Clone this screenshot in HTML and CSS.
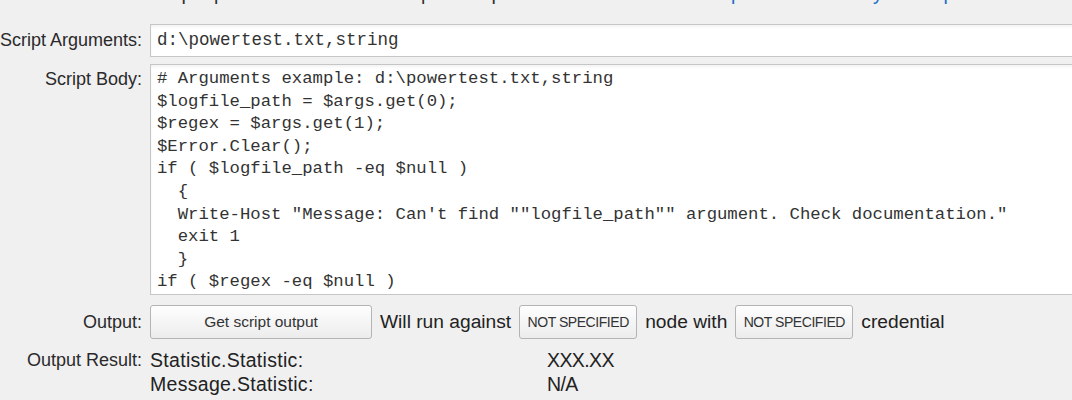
FILE: index.html
```html
<!DOCTYPE html>
<html lang="en">
<head>
    <meta charset="UTF-8">
    <title>PowerShell Script Monitor</title>
    <link rel="stylesheet" href="styles.css">
</head>
<body>
    <div class="hint">Output pairs must be written to print output lines. More <a href="#">Read about parameters and your output</a></div>
    <div class="row">
        <span class="label">Script Arguments:</span>
        <div class="field">d:\powertest.txt,string</div>
    </div>
    <div class="row row-top row-body">
        <span class="label label-body">Script Body:</span>
<pre class="code"># Arguments example: d:\powertest.txt,string
$logfile_path = $args.get(0);
$regex = $args.get(1);
$Error.Clear();
if ( $logfile_path -eq $null )
  {
  Write-Host "Message: Can't find ""logfile_path"" argument. Check documentation."
  exit 1
  }
if ( $regex -eq $null )</pre>
    </div>
    <div class="row row-output">
        <span class="label">Output:</span>
        <button class="btn btn-main">Get script output</button>
        <span class="inline-text">Will run against</span>
        <button class="btn btn-small">NOT SPECIFIED</button>
        <span class="inline-text">node with</span>
        <button class="btn btn-small">NOT SPECIFIED</button>
        <span class="inline-text">credential</span>
    </div>
    <div class="row row-top row-result">
        <span class="label label-result">Output Result:</span>
        <div class="results">
            <span>Statistic.Statistic:</span><span class="value">XXX.XX</span>
            <span>Message.Statistic:</span><span class="value">N/A</span>
        </div>
    </div>
</body>
</html>
```

FILE: styles.css
```css
body {
    margin: 0;
    padding: 0;
    background: #f0f0f0;
    font-family: "Liberation Sans", Arial, sans-serif;
    color: #222;
    overflow: hidden;
}
.hint {
    margin: -19px 0 0 150px;
    font-size: 19.5px;
    line-height: 24px;
    white-space: nowrap;
    color: #333;
}
.hint a {
    color: #1f6fc5;
    text-decoration: none;
}
.row {
    display: flex;
    align-items: center;
    margin-top: 19px;
}
.row-top {
    align-items: flex-start;
}
.row-body {
    margin-top: 7px;
}
.row-output {
    margin-top: 10px;
    gap: 8px;
}
.row-result {
    margin-top: 9px;
}
.label {
    width: 142px;
    flex: none;
    text-align: right;
    margin-right: 8px;
    font-size: 18px;
    white-space: nowrap;
    color: #2a2a2a;
}
.row-output .label {
    margin-right: 0;
}
.label-body {
    padding-top: 4px;
    line-height: 22.6px;
}
.label-result {
    line-height: 24px;
}
.field {
    width: 980px;
    height: 33px;
    box-sizing: border-box;
    flex: none;
    border: 1px solid #c6c6c6;
    background: #fff;
    box-shadow: inset 0 2px 3px rgba(0, 0, 0, 0.05);
    padding: 0 6px;
    font-family: "Liberation Mono", "Courier New", monospace;
    font-size: 17.5px;
    line-height: 31px;
    color: #333;
}
.code {
    width: 980px;
    height: 231px;
    box-sizing: border-box;
    flex: none;
    margin: 0;
    border: 1px solid #c6c6c6;
    background: #fff;
    box-shadow: inset 0 2px 3px rgba(0, 0, 0, 0.05);
    padding: 3px 6px;
    overflow: hidden;
    font-family: "Liberation Mono", "Courier New", monospace;
    font-size: 17.3px;
    line-height: 22.6px;
    color: #333;
}
.btn {
    height: 34px;
    box-sizing: border-box;
    flex: none;
    border: 1px solid #b4b4b4;
    border-radius: 3px;
    background: linear-gradient(#fefefe, #ececec);
    font-family: "Liberation Sans", Arial, sans-serif;
    color: #333;
    padding: 0;
}
.btn-main {
    width: 222px;
    font-size: 15.5px;
}
.btn-small {
    width: 118px;
    font-size: 14px;
    letter-spacing: -0.45px;
}
.inline-text {
    font-size: 19.2px;
    white-space: nowrap;
}
.results {
    display: grid;
    grid-template-columns: 397px auto;
    font-size: 19.5px;
    line-height: 24px;
    letter-spacing: 0.3px;
}
.results .value {
    letter-spacing: -0.6px;
}
```
